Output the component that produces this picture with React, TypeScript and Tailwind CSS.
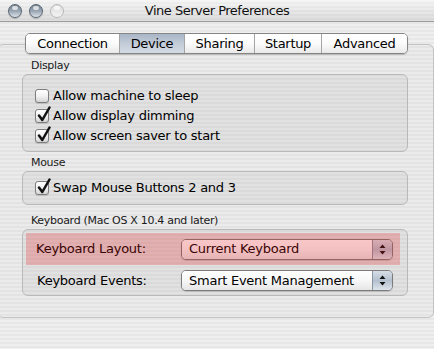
const stripes =
  "bg-[repeating-linear-gradient(180deg,#efefef_0px,#efefef_2px,#e7e7e7_2px,#e7e7e7_4px)]";

const Light = ({ dim }: { dim?: boolean }) => (
  <span
    className={
      dim
        ? "relative block w-[14px] h-[14px] rounded-full border border-[#b9b9b9] bg-linear-to-b from-[#dcdcdc] to-[#f4f4f4]"
        : "relative block w-[14px] h-[14px] rounded-full border border-[#5b6672] bg-linear-to-b from-[#76838f] via-[#98a5b2] to-[#dde4eb] shadow-[0_1px_1px_rgba(0,0,0,0.2)]"
    }
  >
    <span className="absolute left-[3px] top-[1px] w-[6px] h-[4px] rounded-full bg-white/70" />
  </span>
);

const Checkbox = ({ checked }: { checked?: boolean }) => (
  <span className="relative block w-[14px] h-[14px] shrink-0 rounded-[3px] border border-[#7d7d7d] bg-linear-to-b from-white via-[#f2f2f2] to-[#d4d4d4] shadow-[0_1px_1px_rgba(0,0,0,0.15)]">
    {checked && (
      <svg
        className="absolute -top-[4px] left-[1px]"
        width="15"
        height="17"
        viewBox="0 0 15 17"
      >
        <path
          d="M2 9.5 L5.3 14 L12.5 1.5"
          fill="none"
          stroke="#111"
          strokeWidth="2.5"
          strokeLinecap="round"
          strokeLinejoin="round"
        />
      </svg>
    )}
  </span>
);

const tabs: [string, string][] = [
  ["Connection", "w-[93px]"],
  ["Device", "w-[65px]"],
  ["Sharing", "w-[70px]"],
  ["Startup", "w-[67px]"],
  ["Advanced", "w-[86px]"],
];

const Popup = ({ label }: { label: string }) => (
  <div className="flex w-[212px] h-[21px] rounded-[5px] border border-[#7c7c7c] overflow-hidden shadow-[0_1px_1px_rgba(0,0,0,0.15)]">
    <div className="flex-1 flex items-center pl-[7px] bg-linear-to-b from-white via-[#f7f7f7] to-[#e6e6e6] text-[13px] tracking-[-0.25px]">
      {label}
    </div>
    <div className="w-[20px] flex items-center justify-center border-l border-[#8a94a2] bg-linear-to-b from-[#d6dde6] via-[#b4c0ce] to-[#dde3ea]">
      <svg width="7" height="11" viewBox="0 0 7 11">
        <path d="M3.5 0.5 L6.5 4 L0.5 4 Z" fill="#111" />
        <path d="M3.5 10.5 L6.5 7 L0.5 7 Z" fill="#111" />
      </svg>
    </div>
  </div>
);

const GroupLabel = ({ children }: { children: string }) => (
  <div className="pl-[9px] h-[14px] leading-[14px] text-[11px] tracking-[-0.3px] text-[#1a1a1a]">
    {children}
  </div>
);

const CheckRow = ({ checked, label }: { checked?: boolean; label: string }) => (
  <div className="flex items-center h-[20px] gap-[4px]">
    <Checkbox checked={checked} />
    <span className="text-[13px] tracking-[-0.25px]">{label}</span>
  </div>
);

export default function App() {
  return (
    <div
      className={`w-[434px] h-[349px] overflow-hidden ${stripes} font-['DejaVu_Sans',sans-serif] text-black`}
    >
      {/* title bar */}
      <div className="relative h-[22px] border-b border-[#9c9c9c] grid grid-cols-[1fr_auto_1fr] items-center">
        <div className="absolute inset-0 bg-linear-to-b from-white/40 to-black/[0.06]" />
        <div className="relative flex items-center gap-[7px] pl-[8px]">
          <Light />
          <Light />
          <Light dim />
        </div>
        <div className="relative text-[13px] tracking-[-0.5px] text-[#111]">
          Vine Server Preferences
        </div>
        <div />
      </div>

      <div className="pt-[22px]">
        <div className="-ml-[3px] w-[437px] h-[274px] rounded-[6px] border border-[#c3c3c3] bg-black/[0.015] pl-[24px] pr-[25px]">
          {/* tabs */}
          <div className="-mt-[12px] ml-[3px] flex w-[383px] h-[21px] rounded-[5px] border border-[#858585] overflow-hidden shadow-[0_1px_1px_rgba(0,0,0,0.2)]">
            {tabs.map(([t, w], i) => (
              <div
                key={t}
                className={`${w} flex items-center justify-center text-[13px] tracking-[-0.3px] ${
                  i > 0 ? "border-l border-[#a5a5a5]" : ""
                } ${
                  t === "Device"
                    ? "bg-linear-to-b from-[#a9b6c6] via-[#c2ccd8] to-[#d4dbe4]"
                    : "bg-linear-to-b from-white via-[#fbfbfb] to-[#e9e9e9]"
                }`}
              >
                {t}
              </div>
            ))}
          </div>

          <div className="mt-[5px]">
            <GroupLabel>Display</GroupLabel>
            <div className="mt-[1px] h-[78px] rounded-[6px] border border-[#b9b9b9] bg-black/[0.04] pt-[11px] pl-[12px]">
              <CheckRow label="Allow machine to sleep" />
              <CheckRow checked label="Allow display dimming" />
              <CheckRow checked label="Allow screen saver to start" />
            </div>
          </div>

          <div className="mt-[4px]">
            <GroupLabel>Mouse</GroupLabel>
            <div className="mt-[1px] h-[34px] rounded-[6px] border border-[#b9b9b9] bg-black/[0.04] pt-[6px] pl-[12px]">
              <CheckRow checked label="Swap Mouse Buttons 2 and 3" />
            </div>
          </div>

          <div className="mt-[9px]">
            <GroupLabel>Keyboard (Mac OS X 10.4 and later)</GroupLabel>
            <div className="mt-[1px] h-[67px] rounded-[6px] border border-[#b9b9b9] bg-black/[0.04] pt-[3px] pl-[3px]">
              <div className="relative flex items-center h-[32px] w-[374px] pl-[10px]">
                <span className="w-[145px] text-[13px] tracking-[-0.25px]">
                  Keyboard Layout:
                </span>
                <Popup label="Current Keyboard" />
                <div className="absolute inset-0 bg-[rgba(230,20,20,0.24)] pointer-events-none" />
              </div>
              <div className="mt-[5px] flex items-center h-[21px] w-[374px] pl-[11px]">
                <span className="w-[144px] text-[13px] tracking-[-0.25px]">
                  Keyboard Events:
                </span>
                <Popup label="Smart Event Management" />
              </div>
            </div>
          </div>
        </div>
      </div>
    </div>
  );
}
